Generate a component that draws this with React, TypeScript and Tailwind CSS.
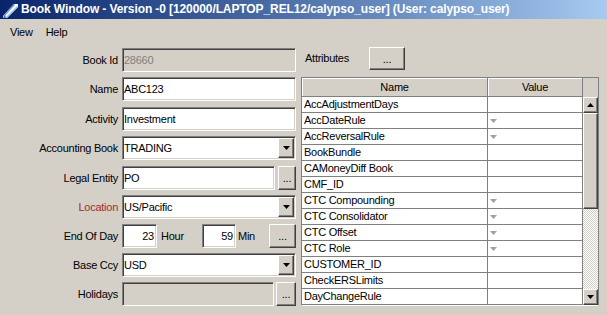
import React from "react";

const sunken =
  "border border-t-[#808080] border-l-[#808080] border-b-white border-r-white shadow-[inset_1px_1px_0_#404040,inset_-1px_-1px_0_#d4d0c8]";
const raised =
  "border border-t-white border-l-white border-r-[#404040] border-b-[#404040] shadow-[inset_-1px_-1px_0_#808080,inset_1px_1px_0_#d4d0c8] bg-[#d4d0c8]";

function Tri({ color = "#000", up = false }: { color?: string; up?: boolean }) {
  return (
    <svg width="7" height="4" viewBox="0 0 7 4">
      {up ? (
        <polygon points="0,4 7,4 3.5,0" fill={color} />
      ) : (
        <polygon points="0,0 7,0 3.5,4" fill={color} />
      )}
    </svg>
  );
}

function Ellipsis({ w = "w-[19px]" }: { w?: string }) {
  return (
    <div className={`${raised} ${w} h-[24px] flex items-end justify-center pb-[5px] leading-none`}>
      <span className="text-[11px]">...</span>
    </div>
  );
}

function TextBox({ value, disabled = false, className = "" }: { value?: string; disabled?: boolean; className?: string }) {
  return (
    <div
      className={`${sunken} h-[24px] flex items-center pl-[1px] ${
        disabled ? "bg-[#d4d0c8] text-[#808080]" : "bg-white text-black"
      } ${className}`}
    >
      {value}
    </div>
  );
}

function Combo({ value }: { value: string }) {
  return (
    <div className={`${sunken} h-[24px] w-full bg-white flex items-stretch`}>
      <div className="flex-1 flex items-center pl-[1px]">{value}</div>
      <div className={`${raised} w-[16px] my-[1px] mr-[1px] flex items-center justify-center`}>
        <Tri />
      </div>
    </div>
  );
}

function Row({ label, mt, red = false, children }: { label: string; mt: string; red?: boolean; children: React.ReactNode }) {
  return (
    <div className={`flex items-center h-[24px] ${mt}`}>
      <div className={`w-[118px] text-right ${red ? "text-[#a52a2a]" : "text-black"}`}>{label}</div>
      <div className="ml-[4px] w-[174px] flex items-center">{children}</div>
    </div>
  );
}

const attrs: { name: string; dd: boolean }[] = [
  { name: "AccAdjustmentDays", dd: false },
  { name: "AccDateRule", dd: true },
  { name: "AccReversalRule", dd: true },
  { name: "BookBundle", dd: false },
  { name: "CAMoneyDiff Book", dd: false },
  { name: "CMF_ID", dd: false },
  { name: "CTC Compounding", dd: true },
  { name: "CTC Consolidator", dd: true },
  { name: "CTC Offset", dd: true },
  { name: "CTC Role", dd: true },
  { name: "CUSTOMER_ID", dd: false },
  { name: "CheckERSLimits", dd: false },
  { name: "DayChangeRule", dd: false },
];

export default function App() {
  return (
    <div className="w-[607px] h-[315px] overflow-hidden bg-[#d4d0c8] text-[11px] leading-[13px] tracking-[-0.25px] font-['Liberation_Sans',Arial,sans-serif] text-black">
      {/* Title bar */}
      <div className="h-[19px] flex items-center bg-gradient-to-r from-[#0a246a] to-[#a6caf0]">
        <svg width="16" height="16" viewBox="0 0 16 16" className="ml-[2px]">
          <polygon points="1,14 12,2 16,2 16,5 5,16 1,16" fill="#ffffff" />
          <polygon points="1,14 12,2 13,3 2,15" fill="#6f9fd8" />
          <polygon points="3,16 15,4 16,5 5,16" fill="#9fbfe8" />
          <polygon points="1,16 3,13 4,16" fill="#3a6cc0" />
        </svg>
        <span className="ml-[3px] text-white font-bold text-[12px] tracking-[-0.1px]">
          Book Window - Version -0 [120000/LAPTOP_REL12/calypso_user] (User: calypso_user)
        </span>
      </div>
      {/* Menu bar */}
      <div className="h-[23px] flex pt-[7px]">
        <span className="ml-[10px]">View</span>
        <span className="ml-[13px]">Help</span>
      </div>
      {/* Content */}
      <div className="flex">
        <div className="w-[296px] flex flex-col pt-[6px]">
          <Row label="Book Id" mt="mt-0">
            <TextBox value="28660" disabled className="w-full" />
          </Row>
          <Row label="Name" mt="mt-[5px]">
            <TextBox value="ABC123" className="w-full" />
          </Row>
          <Row label="Activity" mt="mt-[6px]">
            <TextBox value="Investment" className="w-full" />
          </Row>
          <Row label="Accounting Book" mt="mt-[5px]">
            <Combo value="TRADING" />
          </Row>
          <Row label="Legal Entity" mt="mt-[6px]">
            <TextBox value="PO" className="flex-1" />
            <div className="ml-[3px]">
              <Ellipsis w="w-[18px]" />
            </div>
          </Row>
          <Row label="Location" mt="mt-[5px]" red>
            <Combo value="US/Pacific" />
          </Row>
          <Row label="End Of Day" mt="mt-[5px]">
            <div className={`${sunken} w-[35px] h-[24px] bg-white flex items-center justify-end pr-[2px]`}>23</div>
            <span className="w-[45px] pl-[4px]">Hour</span>
            <div className={`${sunken} w-[34px] h-[24px] bg-white flex items-center justify-end pr-[2px]`}>59</div>
            <span className="w-[33px] pl-[2px]">Min</span>
            <Ellipsis w="w-[27px]" />
          </Row>
          <Row label="Base Ccy" mt="mt-[5px]">
            <Combo value="USD" />
          </Row>
          <Row label="Holidays" mt="mt-[5px]">
            <TextBox disabled className="flex-1" />
            <div className="ml-[2px]">
              <Ellipsis w="w-[20px]" />
            </div>
          </Row>
        </div>
        <div className="ml-[5px] w-[298px] flex flex-col pt-[5px]">
          <div className="flex items-center h-[23px]">
            <span className="w-[68px] pl-[4px]">Attributes</span>
            <div className={`${raised} w-[36px] h-[23px] flex items-end justify-center pb-[4px] leading-none`}>
              <span>...</span>
            </div>
          </div>
          <div className="mt-[7px] w-[298px] h-[229px] border border-t-[#808080] border-l-[#808080] border-r-[#808080] border-b-white flex">
            <div className="w-[281px] flex flex-col">
              <div className="h-[19px] flex">
                <div className="w-[186px] flex items-center justify-center border-r border-b border-[#808080] shadow-[inset_1px_1px_0_#ffffff] bg-[#d4d0c8]">
                  Name
                </div>
                <div className="w-[95px] flex items-center justify-center border-r border-b border-[#808080] shadow-[inset_1px_1px_0_#ffffff] bg-[#d4d0c8]">
                  Value
                </div>
              </div>
              {attrs.map((a) => (
                <div key={a.name} className="h-[16px] flex bg-white border-b border-[#808080]">
                  <div className="w-[186px] border-r border-[#808080] pl-[2px] flex items-center">{a.name}</div>
                  <div className="w-[95px] border-r border-[#808080] pl-[2px] flex items-center">
                    {a.dd && <Tri color="#a0a0a0" />}
                  </div>
                </div>
              ))}
            </div>
            <div className="w-[15px] flex flex-col">
              <div className="h-[19px] bg-[#d4d0c8]" />
              <div className={`${raised} h-[16px] flex items-center justify-center`}>
                <Tri up />
              </div>
              <div className={`${raised} h-[96px]`} />
              <div className="flex-1 bg-[repeating-conic-gradient(#ffffff_0%_25%,#d4d0c8_0%_50%)] bg-[length:2px_2px]" />
              <div className={`${raised} h-[16px] flex items-center justify-center`}>
                <Tri />
              </div>
            </div>
          </div>
        </div>
      </div>
    </div>
  );
}
